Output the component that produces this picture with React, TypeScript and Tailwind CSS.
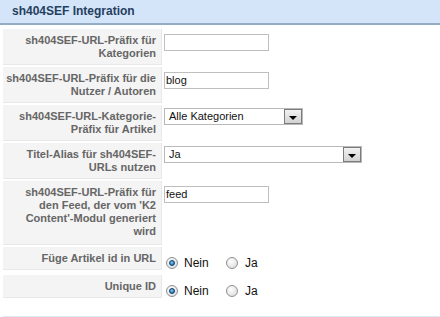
import React from "react";

type Row = {
  label: string[];
  height: string;
  kind: "text" | "select" | "radio";
  value?: string;
  width?: string;
};

const rows: Row[] = [
  { label: ["sh404SEF-URL-Präfix für", "Kategorien"], height: "h-[36px]", kind: "text", value: "" },
  { label: ["sh404SEF-URL-Präfix für die", "Nutzer / Autoren"], height: "h-[36px]", kind: "text", value: "blog" },
  { label: ["sh404SEF-URL-Kategorie-", "Präfix für Artikel"], height: "h-[36px]", kind: "select", value: "Alle Kategorien", width: "w-[139px]" },
  { label: ["Titel-Alias für sh404SEF-", "URLs nutzen"], height: "h-[36px]", kind: "select", value: "Ja", width: "w-[198px]" },
  {
    label: ["sh404SEF-URL-Präfix für", "den Feed, der vom 'K2", "Content'-Modul generiert", "wird"],
    height: "h-[64px]",
    kind: "text",
    value: "feed",
  },
  { label: ["Füge Artikel id in URL"], height: "h-[23px]", kind: "radio" },
  { label: ["Unique ID"], height: "h-[23px]", kind: "radio" },
];

const Radio = ({ checked }: { checked: boolean }) => (
  <span className="w-[12px] h-[12px] rounded-full border border-[#8f9092] bg-[radial-gradient(circle_at_40%_35%,#ffffff,#d6d6d6)] flex items-center justify-center shrink-0">
    {checked && (
      <span className="w-[6px] h-[6px] rounded-full bg-[radial-gradient(circle_at_40%_35%,#7cc4f2,#0e5fa4)] border border-[#0b3f6e]" />
    )}
  </span>
);

const FakeSelect = ({ value, width }: { value: string; width: string }) => (
  <div className={`${width} h-[17px] border border-[#b9b9b9] bg-white flex items-stretch`}>
    <span className="flex-1 pl-[4px] text-[11px] leading-[15px] text-[#111]">{value}</span>
    <span className="w-[18px] border border-[#7b7b7b] bg-[linear-gradient(#f2f2f2,#d2d2d2)] flex items-end justify-center pb-[3px]">
      <span className="w-0 h-0 border-l-[4px] border-r-[4px] border-t-[4px] border-l-transparent border-r-transparent border-t-black" />
    </span>
  </div>
);

export default function App() {
  return (
    <div className="w-[440px] h-[317px] bg-white overflow-hidden font-['Liberation_Sans',Arial,sans-serif]">
      <div className="h-[25px] bg-[#d5e5f9] border-b-2 border-[#93adc7] pl-[12px] pt-[4px]">
        <h2 className="text-[12px] leading-[14px] font-bold text-[#24405f]">sh404SEF Integration</h2>
      </div>

      <div className="flex flex-col gap-[2px] mt-[4px]">
        {rows.map((row, idx) => (
          <div key={idx} className={`flex ${idx === 6 ? "mt-[3px]" : ""}`}>
            <div
              className={`${row.height} w-[159px] ml-[3px] bg-[#f4f4f4] border-b border-r border-[#e8e8e8] pt-[5px] pr-[5px] text-right text-[11px] leading-[13px] font-bold text-[#666666]`}
            >
              {row.label.map((l, i) => (
                <div key={i}>{l}</div>
              ))}
            </div>

            <div className="ml-[2px]">
              {row.kind === "text" && (
                <input
                  readOnly
                  defaultValue={row.value}
                  className="mt-[3px] w-[105px] h-[17px] border border-[#bfbfbf] px-[1px] text-[11px] text-[#111] outline-none"
                />
              )}
              {row.kind === "select" && (
                <div className="mt-[3px]">
                  <FakeSelect value={row.value!} width={row.width!} />
                </div>
              )}
              {row.kind === "radio" && (
                <div className="mt-[10px] ml-[2px] flex items-center text-[12px] leading-[12px] text-[#111]">
                  <Radio checked />
                  <span className="ml-[6px] w-[42px]">Nein</span>
                  <Radio checked={false} />
                  <span className="ml-[7px]">Ja</span>
                </div>
              )}
            </div>
          </div>
        ))}
      </div>

      <div className="mt-[18px] ml-[3px] h-[10px] bg-[#dce9f9]" />
    </div>
  );
}
